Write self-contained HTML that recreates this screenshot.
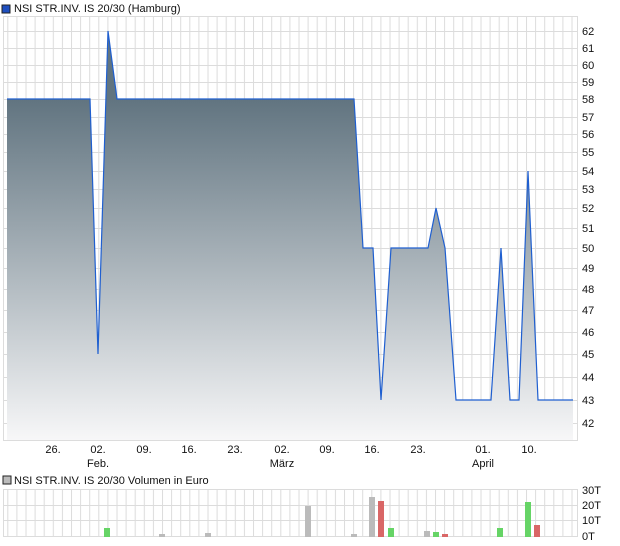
<!DOCTYPE html>
<html><head><meta charset="utf-8"><style>
body{margin:0;background:#fff;width:620px;height:546px;overflow:hidden;font-family:"Liberation Sans",sans-serif}
svg{display:block}
text{font-family:"Liberation Sans",sans-serif;font-size:11px;fill:#111}
</style></head><body>
<svg width="620" height="546" xmlns="http://www.w3.org/2000/svg">
<defs>
<pattern id="vg" x="7.3" y="0" width="9.1" height="600" patternUnits="userSpaceOnUse"><rect x="0" y="0" width="1" height="600" fill="#dcdcdc"/></pattern>
<linearGradient id="fg" x1="0" y1="99" x2="0" y2="440" gradientUnits="userSpaceOnUse"><stop offset="0" stop-color="#617480"/><stop offset="1" stop-color="#f7f7f8"/></linearGradient>
</defs>
<rect x="2" y="5" width="8" height="8" fill="#1f4fbf" stroke="#222" stroke-width="1"/>
<text x="14" y="12">NSI STR.INV. IS 20/30 (Hamburg)</text>
<rect x="3" y="16" width="575" height="425" fill="url(#vg)"/>
<rect x="3.5" y="16.5" width="574" height="424" fill="none" stroke="#dcdcdc"/>
<g stroke="#dcdcdc">
<line x1="3" x2="578" y1="31.5" y2="31.5"/><line x1="3" x2="578" y1="48.5" y2="48.5"/><line x1="3" x2="578" y1="65.5" y2="65.5"/><line x1="3" x2="578" y1="82.5" y2="82.5"/><line x1="3" x2="578" y1="99.5" y2="99.5"/><line x1="3" x2="578" y1="117.5" y2="117.5"/><line x1="3" x2="578" y1="134.5" y2="134.5"/><line x1="3" x2="578" y1="152.5" y2="152.5"/><line x1="3" x2="578" y1="171.5" y2="171.5"/><line x1="3" x2="578" y1="189.5" y2="189.5"/><line x1="3" x2="578" y1="208.5" y2="208.5"/><line x1="3" x2="578" y1="228.5" y2="228.5"/><line x1="3" x2="578" y1="248.5" y2="248.5"/><line x1="3" x2="578" y1="268.5" y2="268.5"/><line x1="3" x2="578" y1="289.5" y2="289.5"/><line x1="3" x2="578" y1="310.5" y2="310.5"/><line x1="3" x2="578" y1="332.5" y2="332.5"/><line x1="3" x2="578" y1="354.5" y2="354.5"/><line x1="3" x2="578" y1="377.5" y2="377.5"/><line x1="3" x2="578" y1="400.5" y2="400.5"/><line x1="3" x2="578" y1="423.5" y2="423.5"/>
</g>
<path d="M7,99 L90,99 L98,354 L108,31 L117,99 L354,99 L363,248 L373,248 L381,400 L391,248 L428,248 L436,208 L445,248 L456,400 L491,400 L501,248 L510,400 L519,400 L528,171 L538,400 L573,400 L573,440 L7,440 Z" fill="url(#fg)"/>
<path d="M7,99 L90,99 L98,354 L108,31 L117,99 L354,99 L363,248 L373,248 L381,400 L391,248 L428,248 L436,208 L445,248 L456,400 L491,400 L501,248 L510,400 L519,400 L528,171 L538,400 L573,400" fill="none" stroke="#1f5fd0" stroke-width="1.2"/>
<g>
<text x="582" y="35">62</text><text x="582" y="52">61</text><text x="582" y="69">60</text><text x="582" y="86">59</text><text x="582" y="103">58</text><text x="582" y="121">57</text><text x="582" y="138">56</text><text x="582" y="156">55</text><text x="582" y="175">54</text><text x="582" y="193">53</text><text x="582" y="212">52</text><text x="582" y="232">51</text><text x="582" y="252">50</text><text x="582" y="272">49</text><text x="582" y="293">48</text><text x="582" y="314">47</text><text x="582" y="336">46</text><text x="582" y="358">45</text><text x="582" y="381">44</text><text x="582" y="404">43</text><text x="582" y="427">42</text>
</g>
<g text-anchor="middle">
<text x="53" y="453">26.</text><text x="98" y="453">02.</text><text x="144" y="453">09.</text><text x="189" y="453">16.</text><text x="235" y="453">23.</text><text x="282" y="453">02.</text><text x="327" y="453">09.</text><text x="372" y="453">16.</text><text x="418" y="453">23.</text><text x="483" y="453">01.</text><text x="529" y="453">10.</text>
<text x="98" y="467">Feb.</text><text x="282" y="467">März</text><text x="483" y="467">April</text>
</g>
<rect x="3" y="476" width="8" height="8" fill="#bbb" stroke="#222" stroke-width="1"/>
<text x="14" y="484">NSI STR.INV. IS 20/30 Volumen in Euro</text>
<rect x="3" y="489" width="575" height="48" fill="url(#vg)"/>
<rect x="3.5" y="489.5" width="574" height="47" fill="none" stroke="#dcdcdc"/>
<g stroke="#dcdcdc"><line x1="3" x2="578" y1="505.5" y2="505.5"/><line x1="3" x2="578" y1="520.5" y2="520.5"/></g>
<g>
<rect x="104" y="528" width="6" height="9" fill="#66d466"/>
<rect x="159" y="534" width="6" height="3" fill="#bbb"/>
<rect x="205" y="533" width="6" height="4" fill="#bbb"/>
<rect x="305" y="506" width="6" height="31" fill="#bbb"/>
<rect x="351" y="534" width="6" height="3" fill="#bbb"/>
<rect x="369" y="497" width="6" height="40" fill="#bbb"/>
<rect x="378" y="501" width="6" height="36" fill="#d96666"/>
<rect x="388" y="528" width="6" height="9" fill="#66d466"/>
<rect x="424" y="531" width="6" height="6" fill="#bbb"/>
<rect x="433" y="532" width="6" height="5" fill="#66d466"/>
<rect x="442" y="534" width="6" height="3" fill="#d96666"/>
<rect x="497" y="528" width="6" height="9" fill="#66d466"/>
<rect x="525" y="502" width="6" height="35" fill="#66d466"/>
<rect x="534" y="525" width="6" height="12" fill="#d96666"/>
</g>
<text x="582" y="494">30T</text><text x="582" y="509">20T</text><text x="582" y="524">10T</text><text x="582" y="540">0T</text>
</svg>
</body></html>
